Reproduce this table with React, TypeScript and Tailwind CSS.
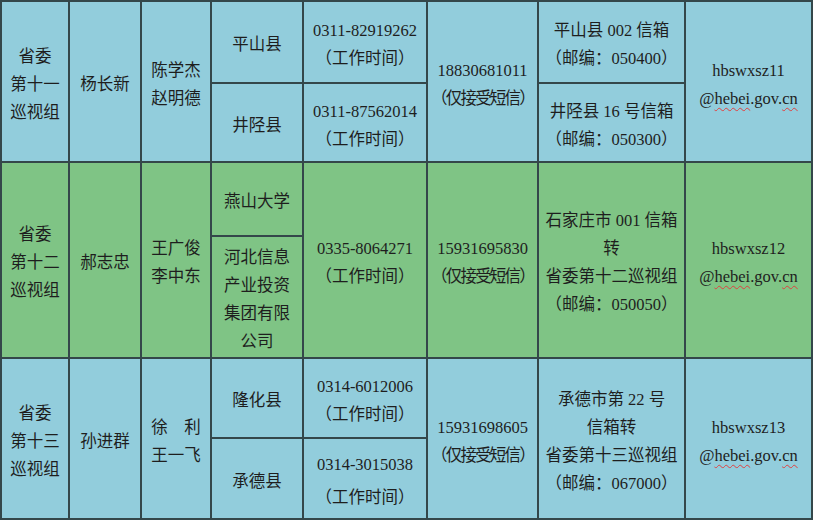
import React from 'react';

const blue = 'bg-[#92cddc]';
const green = 'bg-[#7fc485]';

function Cell({
  lines,
  bg,
  span = '',
}: {
  lines: React.ReactNode[];
  bg: string;
  span?: string;
}) {
  return (
    <div className={`${bg} ${span} flex flex-col items-center justify-center pt-[6px] text-center`}>
      {lines.map((l, i) => (
        <div key={i} className="leading-[28px] whitespace-nowrap">
          {l}
        </div>
      ))}
    </div>
  );
}

function Email({ n }: { n: string }) {
  const wavy = 'underline decoration-wavy decoration-[#e04040] decoration-1 underline-offset-[3px]';
  return (
    <>
      <span>hbswxsz{n}</span>
      <span>
        @<span className={wavy}>hebei</span>.gov.<span className={wavy}>cn</span>
      </span>
    </>
  );
}

const sms = <span className="tracking-[-1.8px]">（仅接受短信）</span>;

export default function App() {
  return (
    <div
      className="w-[813px] h-[520px] bg-[#34474a] p-[2px] text-[16.5px] text-[#1e1e1e]"
      style={{ fontFamily: '"Liberation Serif", "Noto Sans CJK SC", serif' }}
    >
      <div className="grid h-full gap-[2px] grid-cols-[66px_70px_68px_90px_122px_109px_145px_125px] grid-rows-[80px_77px_72px_120px_78px_79px]">
        {/* 第十一巡视组 */}
        <Cell bg={blue} span="row-span-2" lines={['省委', '第十一', '巡视组']} />
        <Cell bg={blue} span="row-span-2" lines={['杨长新']} />
        <Cell bg={blue} span="row-span-2" lines={['陈学杰', '赵明德']} />
        <Cell bg={blue} lines={['平山县']} />
        <Cell bg={blue} lines={['0311-82919262', '（工作时间）']} />
        <Cell bg={blue} span="row-span-2" lines={['18830681011', sms]} />
        <Cell bg={blue} lines={['平山县 002 信箱', '（邮编：050400）']} />
        <div className={`${blue} row-span-2 flex flex-col items-center justify-center pt-[6px] leading-[28px]`}>
          <Email n="11" />
        </div>
        <Cell bg={blue} lines={['井陉县']} />
        <Cell bg={blue} lines={['0311-87562014', '（工作时间）']} />
        <Cell bg={blue} lines={['井陉县 16 号信箱', '（邮编：050300）']} />

        {/* 第十二巡视组 */}
        <Cell bg={green} span="row-span-2" lines={['省委', '第十二', '巡视组']} />
        <Cell bg={green} span="row-span-2" lines={['郝志忠']} />
        <Cell bg={green} span="row-span-2" lines={['王广俊', '李中东']} />
        <Cell bg={green} lines={['燕山大学']} />
        <Cell bg={green} span="row-span-2" lines={['0335-8064271', '（工作时间）']} />
        <Cell bg={green} span="row-span-2" lines={['15931695830', sms]} />
        <Cell
          bg={green}
          span="row-span-2"
          lines={['石家庄市 001 信箱', '转', '省委第十二巡视组', '（邮编：050050）']}
        />
        <div className={`${green} row-span-2 flex flex-col items-center justify-center pt-[6px] leading-[28px]`}>
          <Email n="12" />
        </div>
        <Cell bg={green} lines={['河北信息', '产业投资', '集团有限', '公司']} />

        {/* 第十三巡视组 */}
        <Cell bg={blue} span="row-span-2" lines={['省委', '第十三', '巡视组']} />
        <Cell bg={blue} span="row-span-2" lines={['孙进群']} />
        <Cell bg={blue} span="row-span-2" lines={['徐　利', '王一飞']} />
        <Cell bg={blue} lines={['隆化县']} />
        <Cell bg={blue} lines={['0314-6012006', '（工作时间）']} />
        <Cell bg={blue} span="row-span-2" lines={['15931698605', sms]} />
        <Cell
          bg={blue}
          span="row-span-2"
          lines={['承德市第 22 号', '信箱转', '省委第十三巡视组', '（邮编：067000）']}
        />
        <div className={`${blue} row-span-2 flex flex-col items-center justify-center pt-[6px] leading-[28px]`}>
          <Email n="13" />
        </div>
        <Cell bg={blue} lines={['承德县']} />
        <div className={`${blue} flex flex-col items-center justify-center pt-[6px] leading-[28px] gap-[5px]`}>
          <span>0314-3015038</span>
          <span>（工作时间）</span>
        </div>
      </div>
    </div>
  );
}
